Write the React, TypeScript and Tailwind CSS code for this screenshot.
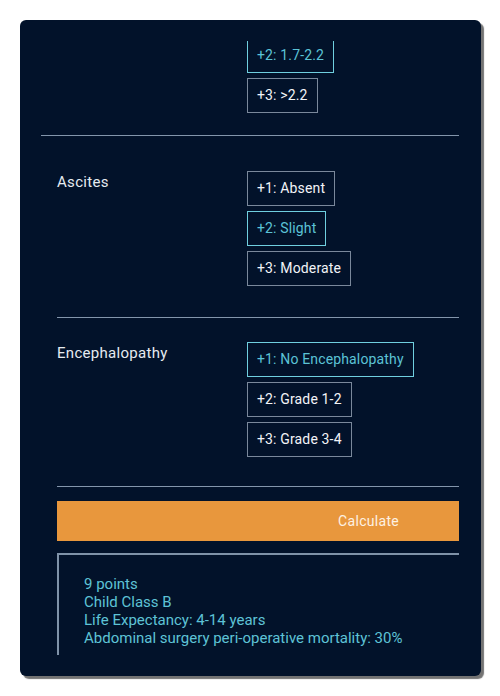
import React from "react";

const font = { fontFamily: "Roboto, 'Liberation Sans', sans-serif" };

function Opt({ label, active, className = "" }: { label: string; active?: boolean; className?: string }) {
  return (
    <div
      className={
        "h-[35px] flex items-center pl-[9px] pr-[9px] border text-[14px] tracking-[0.15px] w-fit " +
        (active ? "border-[#6fcfdf] text-[#5cc3d6]" : "border-[#7a889b] text-[#f2f4f7]") +
        " " +
        className
      }
    >
      {label}
    </div>
  );
}

function Section({ title, options, active, pt, pb }: { title: string; options: string[]; active: number; pt: string; pb: string }) {
  return (
    <div className={"flex ml-[16px] border-b border-[#8395ab] " + pt + " " + pb}>
      <div className="w-[190px] text-[15px] leading-[20px] tracking-[0.3px] text-[#e6ebf1] pt-[1px]">{title}</div>
      <div className="flex flex-col gap-[5px]">
        {options.map((o, i) => (
          <Opt key={o} label={o} active={i === active} />
        ))}
      </div>
    </div>
  );
}

export default function App() {
  return (
    <div className="w-[500px] h-[696px] bg-white pt-[20px] pl-[20px]" style={font}>
      <div className="w-[461px] h-[656px] bg-[#02122a] rounded-[6px] shadow-[3px_3px_1px_rgba(0,0,0,0.55)] p-[21px] pr-[22px]">
        <div className="h-[614px] overflow-hidden">
          <div className="-mt-[3px]">
            <div className="flex border-b border-[#8395ab] pb-[22px]">
              <div className="w-[206px]" />
              <div className="flex flex-col gap-[5px]">
                <Opt label="+2: 1.7-2.2" active />
                <Opt label="+3: >2.2" />
              </div>
            </div>
            <Section title="Ascites" options={["+1: Absent", "+2: Slight", "+3: Moderate"]} active={1} pt="pt-[35px]" pb="pb-[31px]" />
            <Section
              title="Encephalopathy"
              options={["+1: No Encephalopathy", "+2: Grade 1-2", "+3: Grade 3-4"]}
              active={0}
              pt="pt-[24px]"
              pb="pb-[29px]"
            />
            <div className="ml-[16px] mt-[14px] h-[40px] bg-[#e8973d] flex items-center justify-end pr-[60px] text-[14px] tracking-[0.3px] text-[#fdf1e3]">
              Calculate
            </div>
            <div className="ml-[16px] mt-[12px] border-t-2 border-l-2 border-[#7f92a8] pt-[20px] pl-[25px] pb-[10px] text-[15px] leading-[18px] text-[#5ec3d6]">
              <div>9 points</div>
              <div>Child Class B</div>
              <div>Life Expectancy: 4-14 years</div>
              <div>Abdominal surgery peri-operative mortality: 30%</div>
            </div>
          </div>
        </div>
      </div>
    </div>
  );
}
